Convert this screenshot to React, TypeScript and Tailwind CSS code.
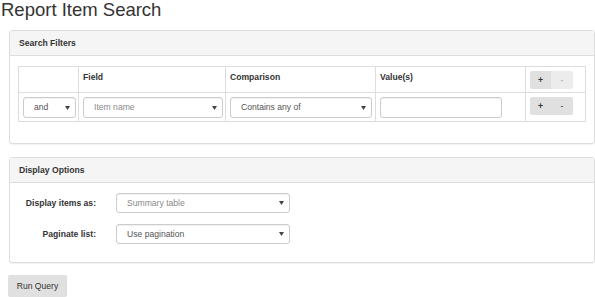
import type { ReactNode } from 'react'

const FONT = { fontFamily: '"Liberation Sans", Arial, sans-serif' }

function Select({ value, muted, className }: { value: string; muted?: boolean; className: string }) {
  return (
    <div
      className={`flex items-center justify-between rounded-[3px] border border-[#ccc] bg-white pl-[10px] pr-[5px] shadow-[inset_0_1px_1px_rgba(0,0,0,0.06)] ${className}`}
    >
      <span className={muted ? 'text-[#8a8a8a]' : 'text-[#555]'}>{value}</span>
      <svg width="5" height="4" viewBox="0 0 5 4" className="shrink-0">
        <path d="M0 0 L5 0 L2.5 4 Z" fill="#444" />
      </svg>
    </div>
  )
}

function Panel({ title, children, bodyClass }: { title: string; children: ReactNode; bodyClass: string }) {
  return (
    <div className="rounded-[3px] border border-[#ddd] bg-white shadow-[0_1px_1px_rgba(0,0,0,0.05)]">
      <div className="flex h-[25px] items-center border-b border-[#ddd] bg-[#f5f5f5] px-[9px] font-bold text-[#333]">
        {title}
      </div>
      <div className={bodyClass}>{children}</div>
    </div>
  )
}

function BtnPair({ minusDisabled }: { minusDisabled?: boolean }) {
  return (
    <div className="flex">
      <div className="flex h-[18px] w-[21px] items-center justify-center rounded-l-[2px] bg-[#e0e0e0] font-bold text-[#333]">+</div>
      <div
        className={`flex h-[18px] w-[22px] items-center justify-center rounded-r-[2px] ${
          minusDisabled ? 'bg-[#ececec] text-[#bbb]' : 'bg-[#e0e0e0] text-[#333]'
        }`}
      >
        -
      </div>
    </div>
  )
}

export default function App() {
  return (
    <div className="h-[297px] w-[595px] overflow-hidden bg-white text-[8.6px] text-[#333]" style={FONT}>
      <h2 className="pl-px text-[18.5px] leading-[19px] font-normal text-[#333]">Report Item Search</h2>

      <div className="mt-[11px] ml-[9px] w-[586px]">
        <Panel title="Search Filters" bodyClass="px-[8px] pt-[10px] pb-[21px]">
          <table className="w-[567px] table-fixed border-collapse">
            <colgroup>
              <col className="w-[60px]" />
              <col className="w-[147px]" />
              <col className="w-[150px]" />
              <col className="w-[150px]" />
              <col className="w-[60px]" />
            </colgroup>
            <thead>
              <tr className="h-[26px]">
                <th className="border border-[#ddd]" />
                <th className="border border-[#ddd] px-[4px] pt-[4px] text-left align-top font-bold">Field</th>
                <th className="border border-[#ddd] px-[4px] pt-[4px] text-left align-top font-bold">Comparison</th>
                <th className="border border-[#ddd] px-[4px] pt-[4px] text-left align-top font-bold">Value(s)</th>
                <th className="border border-[#ddd] px-[4px] pt-[4px] align-top">
                  <BtnPair minusDisabled />
                </th>
              </tr>
            </thead>
            <tbody>
              <tr className="h-[29px]">
                <td className="border border-[#ddd] px-[4px] align-top pt-[4px]">
                  <Select value="and" className="h-[21px] w-[53px]" />
                </td>
                <td className="border border-[#ddd] px-[4px] align-top pt-[4px]">
                  <Select value="Item name" muted className="h-[21px] w-[140px]" />
                </td>
                <td className="border border-[#ddd] px-[4px] align-top pt-[4px]">
                  <Select value="Contains any of" className="h-[21px] w-[142px]" />
                </td>
                <td className="border border-[#ddd] px-[4px] align-top pt-[4px]">
                  <div className="h-[21px] w-[122px] rounded-[3px] border border-[#ccc] bg-white shadow-[inset_0_1px_1px_rgba(0,0,0,0.06)]" />
                </td>
                <td className="border border-[#ddd] px-[4px] align-top pt-[4px]">
                  <BtnPair />
                </td>
              </tr>
            </tbody>
          </table>
        </Panel>
      </div>

      <div className="mt-[13px] ml-[9px] w-[586px]">
        <Panel title="Display Options" bodyClass="flex flex-col gap-[11px] px-[9px] pt-[10px] pb-[18px]">
          <div className="flex items-center">
            <div className="w-[77px] text-right font-bold">Display items as:</div>
            <Select value="Summary table" muted className="ml-[20px] h-[20px] w-[174px]" />
          </div>
          <div className="flex items-center">
            <div className="w-[77px] text-right font-bold">Paginate list:</div>
            <Select value="Use pagination" className="ml-[20px] h-[20px] w-[174px]" />
          </div>
        </Panel>
      </div>

      <div className="mt-[12px] ml-[8px] flex h-[22px] w-[59px] items-center justify-center rounded-[2px] bg-[#e0e0e0] text-[#333]">
        Run Query
      </div>
    </div>
  )
}
